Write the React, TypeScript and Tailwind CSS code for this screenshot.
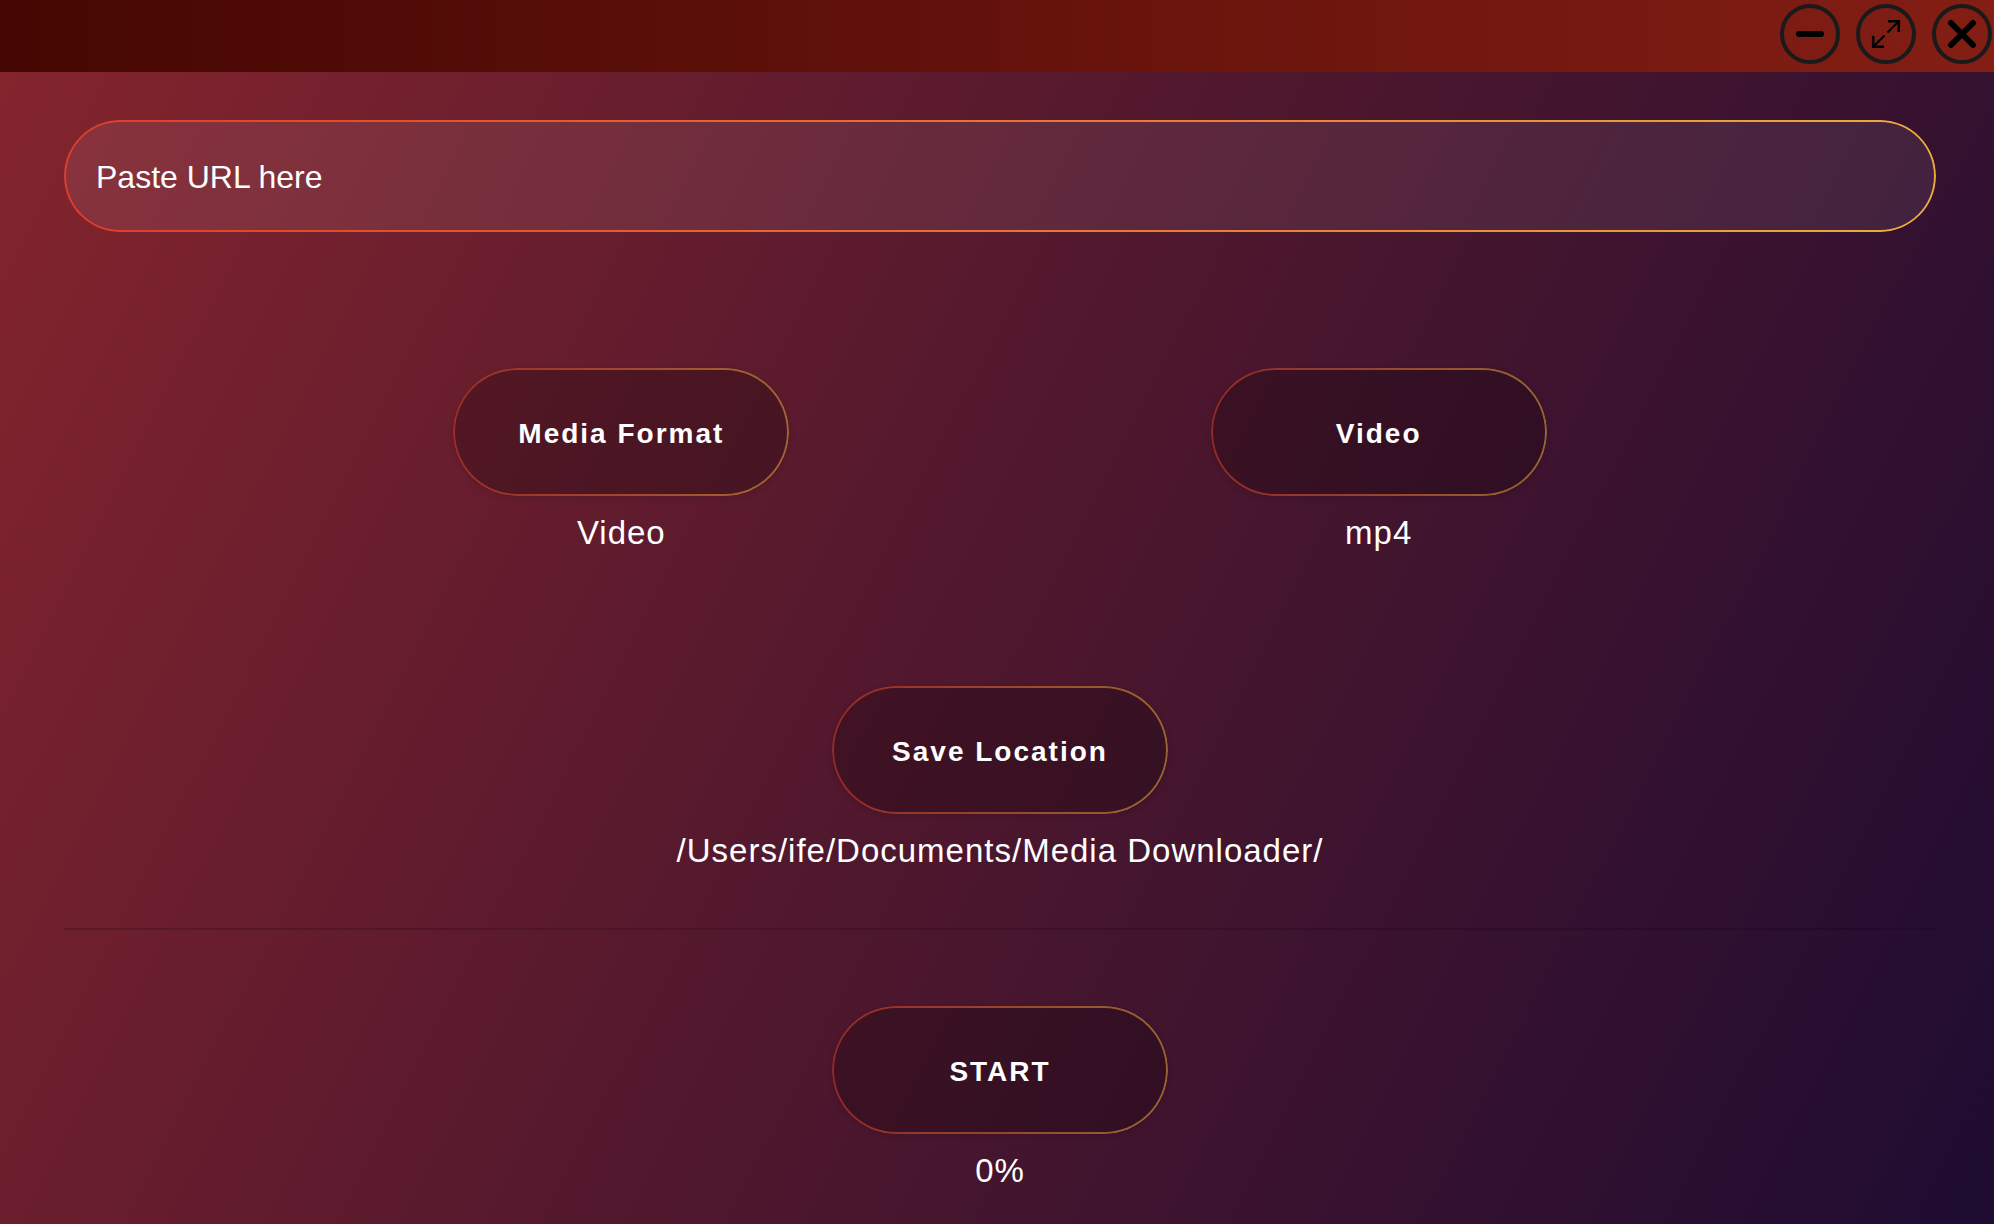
import { useState } from "react";
import type { ReactNode } from "react";

const gradientRing =
  "before:pointer-events-none before:absolute before:inset-0 before:rounded-full before:p-[2px] before:bg-[linear-gradient(to_right,#e03c2b,#ebac3b)] before:[mask:linear-gradient(#000_0_0)_content-box_exclude,linear-gradient(#000_0_0)]";

function WindowButton({ label, children }: { label: string; children: ReactNode }) {
  return (
    <button
      type="button"
      aria-label={label}
      className="flex size-[60px] items-center justify-center rounded-full border-4 border-[#1a1a1a] text-black"
    >
      <svg viewBox="0 0 28 28" className="size-7 overflow-visible" fill="none" stroke="currentColor">
        {children}
      </svg>
    </button>
  );
}

function Action({ title, caption }: { title: string; caption: string }) {
  return (
    <div className="flex w-[336px] flex-col items-center">
      <button
        type="button"
        className={`relative h-32 w-full rounded-full bg-black/22 pt-1 text-[28px] font-bold tracking-[2px] shadow-[0_2px_6px_rgba(0,0,0,0.12)] before:opacity-55 ${gradientRing}`}
      >
        {title}
      </button>
      <p className="mt-[17px] text-[33px] leading-10 tracking-[1px] whitespace-nowrap">{caption}</p>
    </div>
  );
}

export default function App() {
  const [url, setUrl] = useState("");

  return (
    <div className="flex min-h-screen flex-col overflow-hidden bg-[linear-gradient(117deg,#85252d_0%,#52182d_47%,#1e0c32_100%)] font-['Helvetica_Neue','Liberation_Sans',sans-serif] text-white">
      <header className="flex h-[72px] items-start justify-end gap-4 bg-[linear-gradient(to_right,#450703,#831e14)] pt-1 pr-0.5">
        <WindowButton label="Minimize">
          <path d="M3 14H25" strokeWidth="6" strokeLinecap="round" />
        </WindowButton>
        <WindowButton label="Maximize">
          <path d="M16 1.2H26.8V12M1.2 16V26.8H12" strokeWidth="2.6" />
          <path d="M15.5 12.5L26.5 1.5M12.5 15.5L1.5 26.5" strokeWidth="2.1" />
        </WindowButton>
        <WindowButton label="Close">
          <path d="M3 3L25 25M25 3L3 25" strokeWidth="6" strokeLinecap="round" />
        </WindowButton>
      </header>

      <main className="flex flex-col pt-12 pr-[26px] pl-8">
        <div className={`relative mx-8 h-28 rounded-full bg-white/7 ${gradientRing}`}>
          <input
            type="text"
            aria-label="Media URL"
            placeholder="Paste URL here"
            value={url}
            onChange={(event) => setUrl(event.target.value)}
            className="size-full rounded-full bg-transparent px-8 pt-0.5 text-[32px] text-white outline-none placeholder:text-white placeholder:opacity-100"
          />
        </div>

        <section className="mt-[136px] flex justify-evenly">
          <Action title="Media Format" caption="Video" />
          <Action title="Video" caption="mp4" />
        </section>

        <section className="mt-[133px] flex justify-center">
          <Action title="Save Location" caption="/Users/ife/Documents/Media Downloader/" />
        </section>

        <hr className="mx-8 mt-[57px] border-t-2 border-black/15" />

        <section className="mt-[76px] flex justify-center">
          <Action title="START" caption="0%" />
        </section>
      </main>
    </div>
  );
}
